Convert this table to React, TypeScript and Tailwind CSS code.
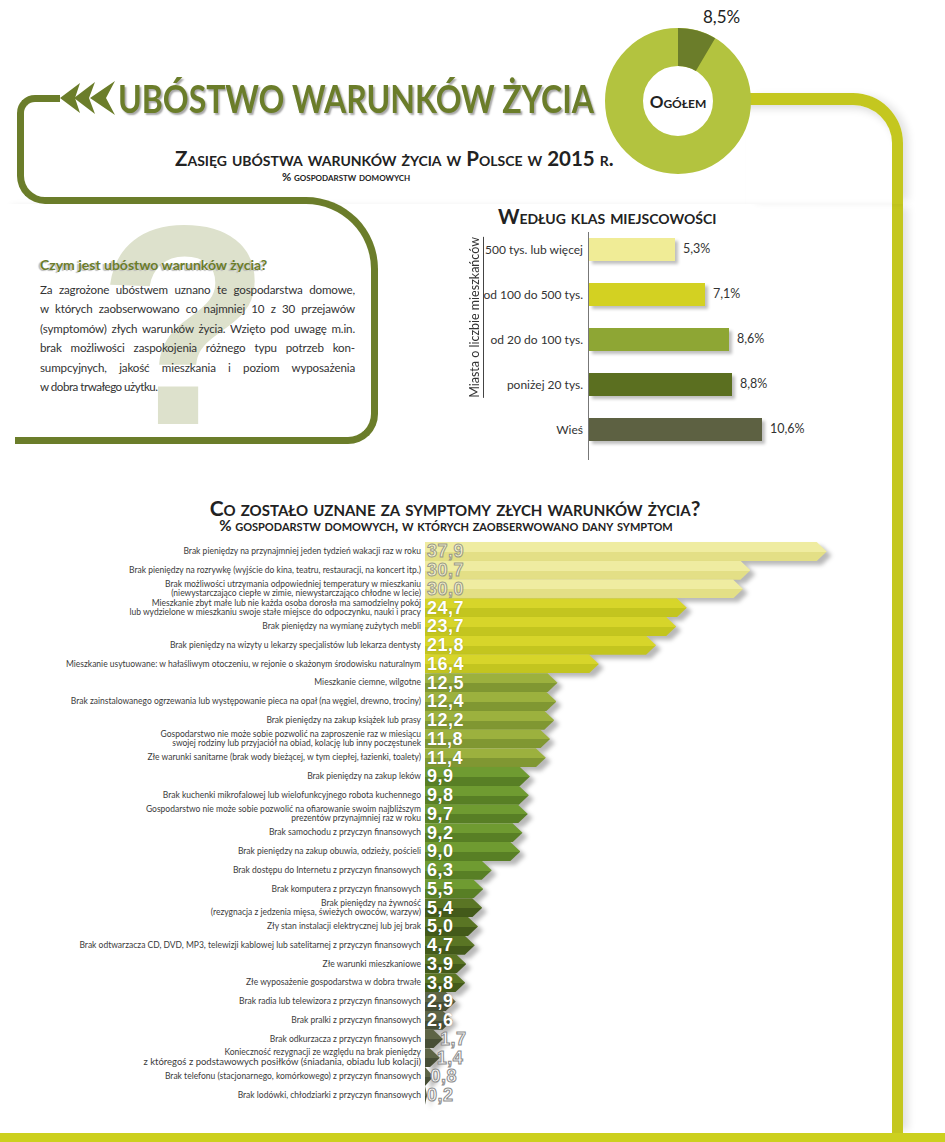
import React from "react";

type Symptom = { v: number; l: string[]; g: number; big?: boolean };

const symptoms: Symptom[] = [
  { v: 37.9, g: 0, l: ["Brak pieniędzy na przynajmniej jeden tydzień wakacji raz w roku"] },
  { v: 30.7, g: 0, l: ["Brak pieniędzy na rozrywkę (wyjście do kina, teatru, restauracji, na koncert itp.)"] },
  {
    v: 30.0,
    g: 0,
    l: [
      "Brak możliwości utrzymania odpowiedniej temperatury w mieszkaniu",
      "(niewystarczająco ciepłe w zimie, niewystarczająco chłodne w lecie)",
    ],
  },
  {
    v: 24.7,
    g: 1,
    l: [
      "Mieszkanie zbyt małe lub nie każda osoba dorosła ma samodzielny pokój",
      "lub wydzielone w mieszkaniu swoje stałe miejsce do odpoczynku, nauki i pracy",
    ],
  },
  { v: 23.7, g: 1, l: ["Brak pieniędzy na wymianę zużytych mebli"] },
  { v: 21.8, g: 1, l: ["Brak pieniędzy na wizyty u lekarzy specjalistów lub lekarza dentysty"] },
  { v: 16.4, g: 1, l: ["Mieszkanie usytuowane: w hałaśliwym otoczeniu, w rejonie o skażonym środowisku naturalnym"] },
  { v: 12.5, g: 2, l: ["Mieszkanie ciemne, wilgotne"] },
  { v: 12.4, g: 2, l: ["Brak zainstalowanego ogrzewania lub występowanie pieca na opał (na węgiel, drewno, trociny)"] },
  { v: 12.2, g: 2, l: ["Brak pieniędzy na zakup książek lub prasy"] },
  {
    v: 11.8,
    g: 2,
    l: [
      "Gospodarstwo nie może sobie pozwolić na zaproszenie raz w miesiącu",
      "swojej rodziny lub przyjaciół na obiad, kolację lub inny poczęstunek",
    ],
  },
  { v: 11.4, g: 2, l: ["Złe warunki sanitarne (brak wody bieżącej, w tym ciepłej, łazienki, toalety)"] },
  { v: 9.9, g: 3, l: ["Brak pieniędzy na zakup leków"] },
  { v: 9.8, g: 3, l: ["Brak kuchenki mikrofalowej lub wielofunkcyjnego robota kuchennego"] },
  {
    v: 9.7,
    g: 3,
    l: ["Gospodarstwo nie może sobie pozwolić na ofiarowanie swoim najbliższym", "prezentów przynajmniej raz w roku"],
  },
  { v: 9.2, g: 3, l: ["Brak samochodu z przyczyn finansowych"] },
  { v: 9.0, g: 3, l: ["Brak pieniędzy na zakup obuwia, odzieży, pościeli"] },
  { v: 6.3, g: 3, l: ["Brak dostępu do Internetu z przyczyn finansowych"] },
  { v: 5.5, g: 3, l: ["Brak komputera z przyczyn finansowych"] },
  {
    v: 5.4,
    g: 4,
    l: ["Brak pieniędzy na żywność", "(rezygnacja z jedzenia mięsa, świeżych owoców, warzyw)"],
  },
  { v: 5.0, g: 4, l: ["Zły stan instalacji elektrycznej lub jej brak"] },
  { v: 4.7, g: 4, l: ["Brak odtwarzacza CD, DVD, MP3, telewizji kablowej lub satelitarnej z przyczyn finansowych"] },
  { v: 3.9, g: 4, l: ["Złe warunki mieszkaniowe"] },
  { v: 3.8, g: 4, l: ["Złe wyposażenie gospodarstwa w dobra trwałe"] },
  { v: 2.9, g: 5, l: ["Brak radia lub telewizora z przyczyn finansowych"] },
  { v: 2.6, g: 5, l: ["Brak pralki z przyczyn finansowych"] },
  { v: 1.7, g: 5, l: ["Brak odkurzacza z przyczyn finansowych"] },
  {
    v: 1.4,
    g: 5,
    big: true,
    l: [
      "Konieczność rezygnacji ze względu na brak pieniędzy",
      "z któregoś z podstawowych posiłków (śniadania, obiadu lub kolacji)",
    ],
  },
  { v: 0.8, g: 5, l: ["Brak telefonu (stacjonarnego, komórkowego) z przyczyn finansowych"] },
  { v: 0.2, g: 5, l: ["Brak lodówki, chłodziarki z przyczyn finansowych"] },
];

// kolory pasków (góra jaśniejsza, dół ciemniejszy)
const barColors = [
  "bg-[linear-gradient(to_bottom,#efeca1_55%,#e3df86_55%)]",
  "bg-[linear-gradient(to_bottom,#d7d52a_55%,#c3c51f_55%)]",
  "bg-[linear-gradient(to_bottom,#9cb13e_55%,#809732_55%)]",
  "bg-[linear-gradient(to_bottom,#6f9b31_55%,#587f25_55%)]",
  "bg-[linear-gradient(to_bottom,#5a7524_55%,#435a1a_55%)]",
  "bg-[linear-gradient(to_bottom,#5d6446_55%,#474e36_55%)]",
];

const classes = [
  { label: "500 tys. lub więcej", v: 5.3, color: "bg-[#f0ec96]" },
  { label: "od 100 do 500 tys.", v: 7.1, color: "bg-[#d3d122]" },
  { label: "od 20 do 100 tys.", v: 8.6, color: "bg-[#8ea634]" },
  { label: "poniżej 20 tys.", v: 8.8, color: "bg-[#5b6f20]" },
  { label: "Wieś", v: 10.6, color: "bg-[#5d6142]" },
];

const paragraph = [
  "Za zagrożone ubóstwem uznano te gospodarstwa domowe,",
  "w których zaobserwowano co najmniej 10 z 30 przejawów",
  "(symptomów) złych warunków życia. Wzięto pod uwagę m.in.",
  "brak możliwości zaspokojenia różnego typu potrzeb kon-",
  "sumpcyjnych, jakość mieszkania i poziom wyposażenia",
];

const fmt = (v: number) => v.toFixed(1).replace(".", ",");

const Chevrons = () => (
  <svg width="58" height="36" viewBox="0 0 58 36" className="shrink-0">
    <polygon points="0,18 20,3 15,18 20,33" fill="#6b7d2a" />
    <polygon points="14,18 35,2 29,18 35,34" fill="#6b7d2a" />
    <polygon points="30,18 55,1 46,18 55,35" fill="#6b7d2a" />
  </svg>
);

const Donut = () => (
  <div className="relative z-10 w-[147px] shrink-0">
    <div className="h-[28px] pl-[98px] pt-[3px] text-[17px] leading-[28px] text-[#222]">8,5%</div>
    <div className="grid h-[146px] w-[146px] place-items-center">
      <svg className="[grid-area:1/1]" width="146" height="146" viewBox="0 0 146 146">
        <circle cx="73" cy="73" r="54" fill="none" stroke="#b3c33f" strokeWidth="38" />
        <circle
          cx="73"
          cy="73"
          r="54"
          fill="none"
          stroke="#6b7d2a"
          strokeWidth="38"
          strokeDasharray="28.84 400"
          transform="rotate(-90 73 73)"
        />
      </svg>
      <div className="[grid-area:1/1] text-[17px] font-bold leading-none text-[#222] [font-variant:small-caps]">
        Ogółem
      </div>
    </div>
  </div>
);

const ClassChart = () => (
  <div className="ml-[88px] w-[340px]">
    <div className="mt-[1px] pl-[32px] whitespace-nowrap text-[20.5px] font-bold leading-[22px] text-[#222] [font-variant:small-caps]">
      Według klas miejscowości
    </div>
    <div className="flex h-[233px]">
      <div className="flex h-[180px] w-[18px] items-center justify-center">
        <div className="rotate-180 whitespace-nowrap border-l border-[#444] pl-[1px] text-[12.5px] leading-[15px] text-[#333] [writing-mode:vertical-rl]">
          Miasta o liczbie mieszkańców
        </div>
      </div>
      <div className="w-[104px] pr-[5px]">
        {classes.map((c) => (
          <div key={c.label} className="flex h-[45px] items-center justify-end whitespace-nowrap text-[12px] text-[#333]">
            {c.label}
          </div>
        ))}
      </div>
      <div className="mt-[5px] w-[1px] bg-[#777]" />
      <div>
        {classes.map((c) => (
          <div key={c.label} className="flex h-[45px] items-center">
            <div
              className={`h-[23px] ${c.color} shadow-[3px_3px_3px_rgba(0,0,0,0.25)]`}
              style={{ width: Math.round(c.v * 16.3) }}
            />
            <span className="ml-[8px] text-[12.5px] text-[#333]">{fmt(c.v)}%</span>
          </div>
        ))}
      </div>
    </div>
  </div>
);

const SymptomRow = ({ s }: { s: Symptom }) => {
  const w = s.v * 10.6;
  const small = s.v < 2;
  const hollow = s.g === 0 || small;
  return (
    <div className="flex h-[18.75px] items-center">
      <div className="w-[421px] shrink-0 text-right text-[8.5px] leading-[8.5px] text-[#3b3b3b]">
        {s.l.map((line, i) => (
          <div key={i} className={s.big && i === 1 ? "text-[9.5px] leading-[10px]" : ""}>
            {line}
          </div>
        ))}
      </div>
      <div className="ml-[4px] grid items-center">
        <div className="[grid-area:1/1] [filter:drop-shadow(5px_4px_2px_rgba(0,0,0,0.28))]">
          <div
            className={`h-[19px] ${barColors[s.g]} [clip-path:polygon(0_0,max(0px,calc(100%_-_10px))_0,100%_50%,max(0px,calc(100%_-_10px))_100%,0_100%)]`}
            style={{ width: w }}
          />
        </div>
        <div
          className={`relative [grid-area:1/1] whitespace-nowrap text-[18px] font-bold leading-none tracking-[0.5px] [font-family:'Liberation_Sans',Arial,sans-serif] ${
            hollow
              ? s.g === 0
                ? "text-[#f4f2cf] [-webkit-text-stroke:1px_#9a9a88]"
                : "text-white [-webkit-text-stroke:1px_#8c8c8c]"
              : "text-white [text-shadow:0_0_1px_rgba(0,0,0,0.35)]"
          }`}
          style={{ marginLeft: small ? Math.max(2, w - 3) : 2 }}
        >
          {fmt(s.v)}
        </div>
      </div>
    </div>
  );
};

export default function App() {
  return (
    <div className="relative h-[1142px] w-[945px] overflow-hidden bg-white text-[#222] [font-family:Lato,'Open_Sans',sans-serif]">
      {/* nagłówek */}
      <div className="flex h-[204px] w-[903px]">
        <div className="w-[605px] shrink-0">
          <div className="ml-[17px] mt-[95px] h-[109px] w-[285px] rounded-tl-[18px] rounded-bl-[28px] border-b-[7px] border-l-[7px] border-t-[7px] border-[#6b7d2a]">
            <div className="-mt-[22px] ml-[36px] flex h-[36px] w-[530px] items-center bg-white">
              <Chevrons />
              <div className="origin-left scale-x-[0.82] whitespace-nowrap text-[39px] font-bold leading-[36px] text-[#6b7d2a] [text-shadow:2px_2px_2px_rgba(0,0,0,0.35)]">
                UBÓSTWO WARUNKÓW ŻYCIA
              </div>
            </div>
            <div className="ml-[151px] mt-[31px] whitespace-nowrap text-[20.5px] font-bold leading-[22px] [font-variant:small-caps]">
              Zasięg ubóstwa warunków życia w Polsce w 2015 r.
            </div>
            <div className="ml-[258px] mt-[1px] whitespace-nowrap text-[11.3px] font-bold leading-[14px] [font-variant:small-caps]">
              % gospodarstw domowych
            </div>
          </div>
        </div>
        <Donut />
        <div className="-ml-[7px] mt-[93px] h-[111px] flex-1 rounded-tr-[50px] border-r-[11px] border-t-[12px] border-[#c4c71f] shadow-[8px_0_8px_-3px_rgba(0,0,0,0.12),inset_0_10px_8px_-7px_rgba(0,0,0,0.15)]" />
      </div>

      {/* treść */}
      <div className="flex h-[929px] w-[903px] flex-col border-r-[11px] border-[#c4c71f] bg-white shadow-[8px_0_8px_-3px_rgba(0,0,0,0.12)]">
        <div className="flex items-start">
          {/* ramka z pytaniem */}
          <div className="relative -mt-[7px] ml-[15px] w-[363px] shrink-0">
            <div className="pointer-events-none absolute left-[82px] top-[-14px] text-[285px] font-bold leading-none text-[#dde1cc] [font-family:'Liberation_Sans',Arial,sans-serif]">
              ?
            </div>
            <div className="relative ml-[30px] h-[200px] rounded-tr-[72px] border-r-[7px] border-t-[7px] border-[#6b7d2a]">
              <div className="-ml-[5px] w-[315px] pt-[51px]">
                <div className="whitespace-nowrap text-[14px] font-bold leading-[20px] text-[#6b7d2a] [text-shadow:-2px_1px_1px_#bbb]">
                  Czym jest ubóstwo warunków życia?
                </div>
                <div className="mt-[5px] text-[11.6px] leading-[19.4px] tracking-[-0.15px] text-[#333]">
                  {paragraph.map((line) => (
                    <div key={line} className="whitespace-nowrap text-justify [text-align-last:justify]">
                      {line}
                    </div>
                  ))}
                  <div className="whitespace-nowrap tracking-[-0.5px]">w dobra trwałego użytku.</div>
                </div>
              </div>
            </div>
            <div className="h-[47px] rounded-br-[30px] border-b-[7px] border-r-[7px] border-[#6b7d2a]" />
          </div>
          <ClassChart />
        </div>

        {/* symptomy */}
        <div className="mt-[37px] pl-[18px] text-center text-[21px] font-bold leading-[22px] text-[#222] [font-variant:small-caps]">
          Co zostało uznane za symptomy złych warunków życia?
        </div>
        <div className="text-center text-[15px] font-bold leading-[12px] text-[#222] [font-variant:small-caps]">
          % gospodarstw domowych, w których zaobserwowano dany symptom
        </div>
        <div className="mt-[11px] flex flex-col">
          {symptoms.map((s, i) => (
            <SymptomRow key={i} s={s} />
          ))}
        </div>
      </div>
      <div className="h-[9px] w-[945px] bg-[#ccd01e]" />
    </div>
  );
}
